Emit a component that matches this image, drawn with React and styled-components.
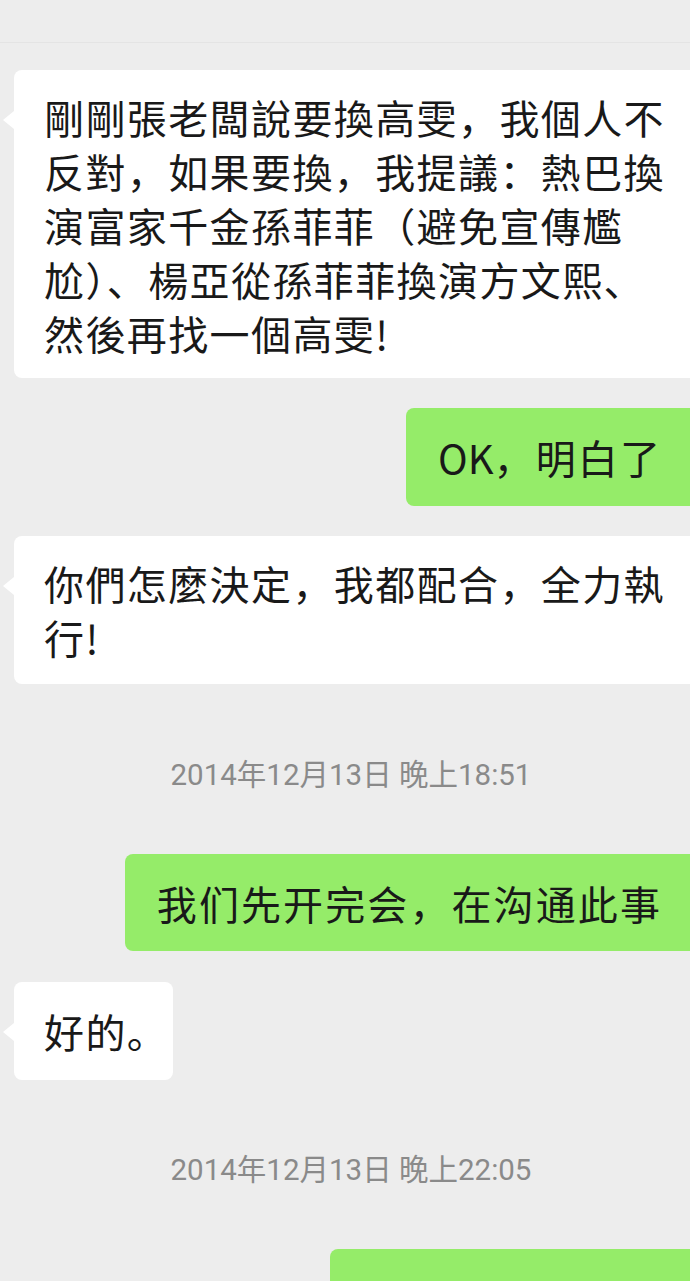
import styled, { createGlobalStyle } from 'styled-components';

const GlobalStyle = createGlobalStyle`
  html, body {
    margin: 0;
    padding: 0;
    overflow: hidden;
    background: #ededed;
  }
`;

const Screen = styled.div`
  width: 690px;
  height: 1281px;
  overflow: hidden;
  background: #ededed;
  font-family: "Noto Sans CJK SC", "Noto Sans CJK TC", "Noto Sans", sans-serif;
`;

const TopBar = styled.div`
  height: 42px;
  border-bottom: 1px solid #e4e4e4;
`;

const Feed = styled.div`
  display: flex;
  flex-direction: column;
  padding-top: 27px;
`;

const Row = styled.div`
  display: flex;
  justify-content: ${(p) => (p.$mine ? 'flex-end' : 'flex-start')};
  padding-left: ${(p) => (p.$mine ? '0' : '14px')};
  margin-top: ${(p) => p.$gap || 0}px;
`;

const Bubble = styled.div`
  position: relative;
  flex: ${(p) => (p.$wide ? 1 : '0 0 auto')};
  width: ${(p) => (p.$w ? `${p.$w}px` : 'auto')};
  background: ${(p) => (p.$mine ? '#95ec69' : '#ffffff')};
  border-radius: ${(p) => (p.$mine || p.$wide ? '8px 0 0 8px' : '8px')};
  padding: ${(p) => p.$pt ?? 20}px 28px ${(p) => p.$pb ?? 20}px
    ${(p) => (p.$mine ? 32 : 30)}px;
  min-height: ${(p) => p.$minHeight || 0}px;
  box-sizing: border-box;
  font-size: 40px;
  letter-spacing: ${(p) => (p.$mine ? 2.1 : 1.4)}px;
  line-height: 54px;
  color: #191919;
  white-space: nowrap;

  &::before {
    content: '';
    display: ${(p) => (p.$mine ? 'none' : 'block')};
    position: absolute;
    left: -11px;
    top: 41px;
    border-top: 9px solid transparent;
    border-bottom: 9px solid transparent;
    border-right: 11px solid #ffffff;
  }
`;

const Latin = styled.span`
  letter-spacing: 0;
`;

const Stamp = styled.div`
  margin-top: ${(p) => p.$gap || 0}px;
  text-align: center;
  padding-left: 12px;
  height: 40px;
  line-height: 40px;
  font-family: Roboto, "Noto Sans CJK SC", sans-serif;
  font-size: 29.5px;
  color: #8a8a8a;
`;

const Lines = ({ lines }) =>
  lines.map((l, i) => (
    <span key={i}>
      {l}
      {i < lines.length - 1 && <br />}
    </span>
  ));

export default function App() {
  return (
    <Screen>
      <GlobalStyle />
      <TopBar />
      <Feed>
        <Row>
          <Bubble $wide $pb={18}>
            <Lines
              lines={[
                '剛剛張老闆說要換高雯，我個人不',
                '反對，如果要換，我提議：熱巴換',
                '演富家千金孫菲菲（避免宣傳尷',
                '尬）、楊亞從孫菲菲換演方文熙、',
                '然後再找一個高雯!',
              ]}
            />
          </Bubble>
        </Row>
        <Row $mine $gap={30}>
          <Bubble $mine $pt={22} $pb={22}>
            <Latin>OK</Latin>，明白了
          </Bubble>
        </Row>
        <Row $gap={30}>
          <Bubble $wide>
            <Lines lines={['你們怎麼決定，我都配合，全力執', '行!']} />
          </Bubble>
        </Row>
        <Stamp $gap={71}>2014年12月13日 晚上18:51</Stamp>
        <Row $mine $gap={59}>
          <Bubble $mine $pt={22} $pb={21}>
            我们先开完会，在沟通此事
          </Bubble>
        </Row>
        <Row $gap={31}>
          <Bubble $w={159} $pt={22} $pb={22}>
            好的。
          </Bubble>
        </Row>
        <Stamp $gap={70}>2014年12月13日 晚上22:05</Stamp>
        <Row $mine $gap={59}>
          <Bubble $mine $w={360} $minHeight={98} />
        </Row>
      </Feed>
    </Screen>
  );
}
